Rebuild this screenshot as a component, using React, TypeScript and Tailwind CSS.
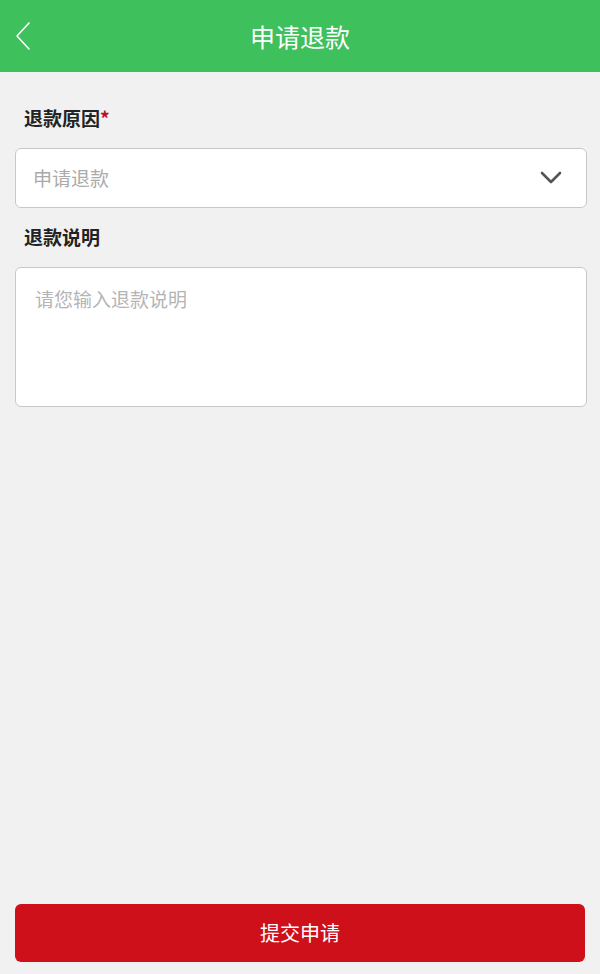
import { useState } from 'react';

const App = () => {
  const [reason, setReason] = useState('');
  const [desc, setDesc] = useState('');

  const font = "font-['Noto_Sans_CJK_SC','Noto_Sans',sans-serif]";

  return (
    <div className={`h-[974px] w-full flex flex-col bg-[#f1f1f1] ${font}`}>
      {/* Header */}
      <div className="h-[72px] shrink-0 bg-[#3ec05c] relative flex items-center justify-center">
        <button className="absolute left-[13px] top-[20px] w-[20px] h-[32px] flex items-center justify-center">
          <svg width="18" height="32" viewBox="0 0 18 32" fill="none">
            <path d="M15 3 L3 16 L15 29" stroke="#ffffff" strokeWidth="1.6" strokeLinecap="round" strokeLinejoin="round" />
          </svg>
        </button>
        <span className="text-white text-[25px] leading-none">申请退款</span>
      </div>

      <div className="flex-1 flex flex-col px-[15px]">
        {/* 退款原因 */}
        <div className="mt-[34px] pl-[9px] h-[24px] flex items-center text-[19px] font-bold text-[#222]">
          退款原因<span className="text-[#b8102a] font-bold">*</span>
        </div>
        <div className="mt-[18px] h-[60px] w-[572px] bg-white border border-[#c8c8c8] rounded-[6px] flex items-center pl-[17px] pr-[24px]">
          <select
            value={reason}
            onChange={e => setReason(e.target.value)}
            className={`flex-1 appearance-none bg-transparent outline-none text-[19px] ${reason ? 'text-[#333]' : 'text-[#aaaaaa]'}`}
          >
            <option value="">申请退款</option>
            <option value="1">商品质量问题</option>
            <option value="2">不想要了</option>
          </select>
          <svg width="22" height="14" viewBox="0 0 22 14" fill="none">
            <path d="M2 2 L11 11 L20 2" stroke="#555555" strokeWidth="2.6" strokeLinecap="round" strokeLinejoin="round" />
          </svg>
        </div>

        {/* 退款说明 */}
        <div className="mt-[17px] pl-[9px] h-[24px] flex items-center text-[19px] font-bold text-[#222]">
          退款说明
        </div>
        <textarea
          value={desc}
          onChange={e => setDesc(e.target.value)}
          placeholder="请您输入退款说明"
          className="mt-[18px] h-[140px] w-[572px] bg-white border border-[#c8c8c8] rounded-[6px] px-[19px] py-[16px] text-[19px] leading-[30px] text-[#333] placeholder:text-[#b4b4b4] outline-none resize-none"
        />

        <div className="flex-1" />

        <button className="mb-[12px] h-[58px] w-[570px] bg-[#cd101a] rounded-[6px] text-white text-[20px]">
          提交申请
        </button>
      </div>
    </div>
  );
};

export default App;
